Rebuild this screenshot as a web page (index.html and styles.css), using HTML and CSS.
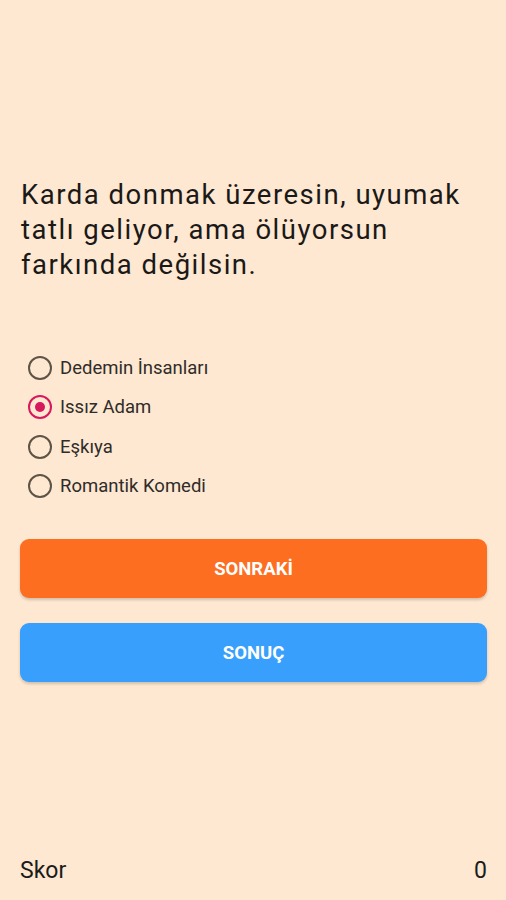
FILE: index.html
```html
<!DOCTYPE html>
<html lang="tr">
<head>
  <meta charset="UTF-8">
  <meta name="viewport" content="width=device-width, initial-scale=1.0">
  <title>Film Quiz</title>
  <link rel="stylesheet" href="styles.css">
</head>
<body>
  <div class="screen">
    <div class="question">Karda donmak üzeresin, uyumak tatlı geliyor, ama ölüyorsun farkında değilsin.</div>

    <div class="options">
      <label class="option">
        <input type="radio" name="answer">
        <span class="radio"></span>
        <span class="option-text">Dedemin İnsanları</span>
      </label>
      <label class="option">
        <input type="radio" name="answer" checked>
        <span class="radio"></span>
        <span class="option-text">Issız Adam</span>
      </label>
      <label class="option">
        <input type="radio" name="answer">
        <span class="radio"></span>
        <span class="option-text">Eşkıya</span>
      </label>
      <label class="option">
        <input type="radio" name="answer">
        <span class="radio"></span>
        <span class="option-text">Romantik Komedi</span>
      </label>
    </div>

    <button class="btn btn-next">SONRAKİ</button>
    <button class="btn btn-result">SONUÇ</button>

    <div class="score">
      <span>Skor</span>
      <span>0</span>
    </div>
  </div>
</body>
</html>
```

FILE: styles.css
```css
body {
  margin: 0;
  padding: 0;
  font-family: Roboto, "Noto Sans", sans-serif;
  background: #fee8d1;
  color: #1c1b1a;
}
.screen {
  height: 900px;
  display: flex;
  flex-direction: column;
  padding: 0 19px 0 20px;
  box-sizing: border-box;
}
.question {
  margin-top: 177px;
  padding-left: 1px;
  font-size: 27.5px;
  line-height: 35px;
  letter-spacing: 1.5px;
  color: #1a1918;
}
.options {
  margin-top: 66px;
  display: flex;
  flex-direction: column;
}
.option {
  display: flex;
  align-items: center;
  height: 39.5px;
  padding-left: 8px;
}
.option input {
  display: none;
}
.radio {
  width: 20px;
  height: 20px;
  border: 2px solid #5d5446;
  border-radius: 50%;
  box-sizing: content-box;
  margin-right: 8px;
  position: relative;
}
.option input:checked + .radio {
  border-color: #d8185d;
}
.option input:checked + .radio::after {
  content: "";
  position: absolute;
  left: 5px;
  top: 5px;
  width: 10px;
  height: 10px;
  border-radius: 50%;
  background: #d8185d;
}
.option-text {
  font-size: 18.5px;
  color: #2f2c29;
}
.btn {
  border: none;
  border-radius: 9px;
  height: 59px;
  width: 100%;
  color: #ffffff;
  font-family: Roboto, "Noto Sans", sans-serif;
  font-weight: bold;
  font-size: 18.5px;
  box-shadow: 0 2px 3px rgba(0, 0, 0, 0.18);
}
.btn-next {
  margin-top: 33px;
  background: #fd6e20;
}
.btn-result {
  margin-top: 25px;
  background: #389ffd;
}
.score {
  margin-top: auto;
  margin-bottom: 16px;
  display: flex;
  justify-content: space-between;
  font-size: 23px;
  color: #1c1b1a;
}
```
